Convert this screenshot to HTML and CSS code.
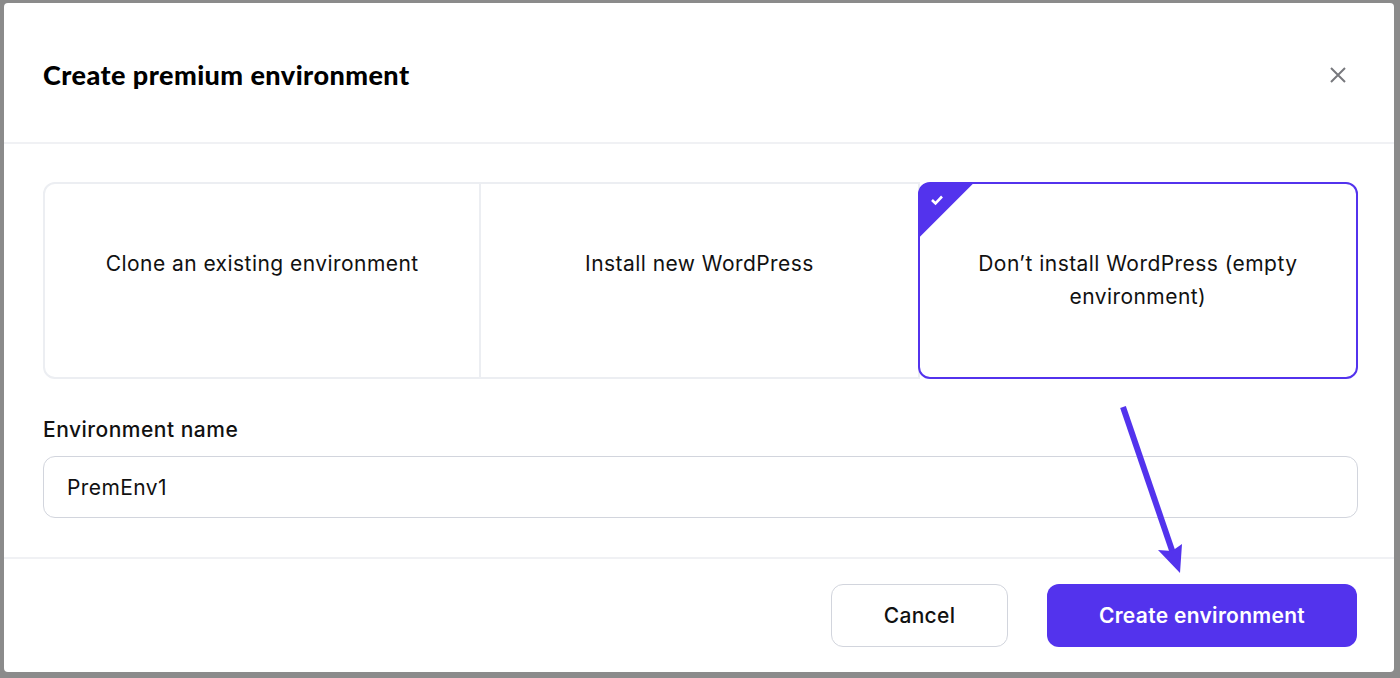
FILE: index.html
```html
<!DOCTYPE html>
<html lang="en">
<head>
    <meta charset="UTF-8">
    <meta name="viewport" content="width=device-width, initial-scale=1.0">
    <title>Create premium environment</title>
    <link rel="stylesheet" href="styles.css">
</head>
<body>

    <div class="modal">
        <header class="modal-header">
            <h1>Create premium environment</h1>
            <button class="close-btn" aria-label="Close">
                <svg width="18" height="18" viewBox="0 0 18 18">
                    <path d="M2 2 L16 16 M16 2 L2 16" stroke="#77787d" stroke-width="2" fill="none"/>
                </svg>
            </button>
        </header>

        <div class="modal-body">
            <div class="options">
                <div class="option">Clone an existing environment</div>
                <div class="option">Install new WordPress</div>
                <div class="option selected">
                    <span class="corner">
                        <svg width="14" height="12" viewBox="0 0 14 12">
                            <path d="M2 6 L5.5 9.5 L12 2.5" stroke="#fff" stroke-width="2.6" fill="none"/>
                        </svg>
                    </span>
                    Don’t install WordPress (empty environment)
                </div>
            </div>

            <label class="field-label" for="env-name">Environment name</label>
            <input class="field-input" id="env-name" type="text" value="PremEnv1">
        </div>

        <footer class="modal-footer">
            <button class="btn btn-secondary">Cancel</button>
            <button class="btn btn-primary">Create environment</button>
        </footer>

        <!-- annotation arrow -->
        <svg class="arrow" width="100" height="200" viewBox="0 0 100 200">
            <path d="M23 17 L76 172" stroke="#5333ed" stroke-width="6" fill="none"/>
            <path d="M80 183 L58 160 L72 161 L82 154 Z" fill="#5333ed"/>
        </svg>
    </div>

</body>
</html>
```

FILE: styles.css
```css
body {
    margin: 0;
    padding: 3px 6px 6px 4px;
    background-color: #8b8b8b;
    font-family: Inter, 'Liberation Sans', sans-serif;
    color: #111;
}

.modal {
    position: relative;
    height: 669px;
    background: #fff;
    border-radius: 4px;
    display: flex;
    flex-direction: column;
}

.modal-header {
    display: flex;
    align-items: center;
    justify-content: space-between;
    padding: 4px 47px 0 39px;
    box-sizing: border-box;
    height: 141px;
    border-bottom: 2px solid #f0f1f4;
}

.modal-header h1 {
    margin: 0;
    font-family: Lato, 'Noto Sans', sans-serif;
    font-weight: 900;
    font-size: 27px;
    letter-spacing: 0.45px;
    color: #000;
}

.close-btn {
    background: none;
    border: none;
    padding: 0;
    cursor: pointer;
    display: flex;
}

.modal-body {
    padding: 38px 36px 0 39px;
    flex: 1;
    border-bottom: 2px solid #f0f1f4;
}

.options {
    display: grid;
    grid-template-columns: 1fr 1fr 1fr;
    height: 197px;
}

.option {
    position: relative;
    display: flex;
    align-items: flex-start;
    justify-content: center;
    text-align: center;
    padding: 63px 40px 0;
    font-size: 21px;
    letter-spacing: 0.45px;
    line-height: 33px;
    color: #111;
    border: 2px solid #eceef2;
    border-left: none;
}

.option:first-child {
    border-left: 2px solid #eceef2;
    border-radius: 12px 0 0 12px;
}

.option:last-child {
    border-radius: 0 12px 12px 0;
}

.option.selected {
    border: 2px solid #5333ed;
    border-radius: 12px;
    margin-left: -2px;
}

.corner {
    position: absolute;
    top: -1px;
    left: -1px;
    width: 55px;
    height: 55px;
    background: #5333ed;
    clip-path: polygon(0 0, 100% 0, 0 100%);
    border-top-left-radius: 10px;
}

.corner svg {
    position: absolute;
    top: 11px;
    left: 11px;
}

.field-label {
    display: block;
    margin-top: 38px;
    font-size: 21px;
    font-weight: 500;
    letter-spacing: 0.5px;
    color: #111;
}

.field-input {
    display: block;
    box-sizing: border-box;
    width: 100%;
    height: 62px;
    margin-top: 14px;
    padding: 0 23px;
    border: 1px solid #d2d5dd;
    border-radius: 12px;
    font-family: Inter, 'Liberation Sans', sans-serif;
    font-size: 21px;
    letter-spacing: 0.4px;
    color: #111;
    outline: none;
}

.modal-footer {
    display: flex;
    justify-content: flex-end;
    gap: 39px;
    padding: 25px 37px 25px 0;
}

.btn {
    height: 63px;
    border-radius: 12px;
    font-family: Inter, 'Liberation Sans', sans-serif;
    font-size: 21px;
    font-weight: 500;
    letter-spacing: 0.3px;
    cursor: pointer;
}

.btn-secondary {
    width: 177px;
    background: #fff;
    border: 1px solid #d2d5dd;
    color: #111;
}

.btn-primary {
    width: 310px;
    background: #5333ed;
    border: none;
    color: #fff;
    font-weight: 600;
}

.arrow {
    position: absolute;
    left: 1096px;
    top: 387px;
}
```
